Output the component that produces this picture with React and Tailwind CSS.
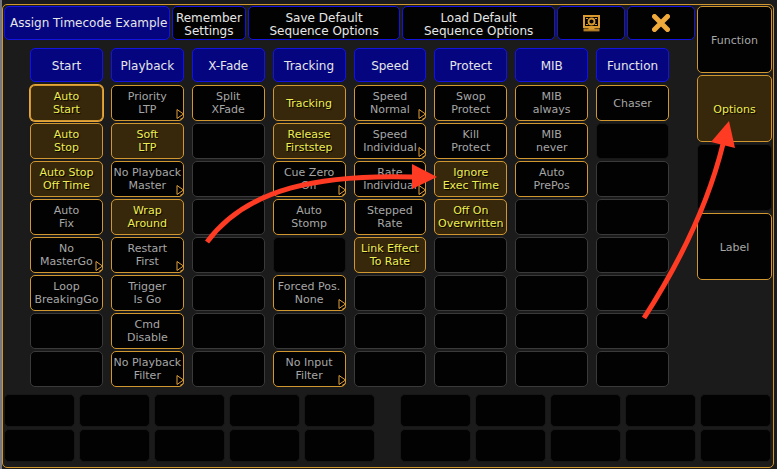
import React, { useState } from "react";

// label: text lines split by "\n", on: active, more: opens a submenu
// "" is an empty slot, null is a slot without a frame
const COLUMNS = [
  {
    title: "Start",
    cells: [
      { label: "Auto\nStart", on: true, focus: true },
      { label: "Auto\nStop", on: true },
      { label: "Auto Stop\nOff Time", on: true },
      { label: "Auto\nFix" },
      { label: "No\nMasterGo", more: true },
      { label: "Loop\nBreakingGo" },
      "",
      "",
    ],
  },
  {
    title: "Playback",
    cells: [
      { label: "Priority\nLTP", more: true },
      { label: "Soft\nLTP", on: true },
      { label: "No Playback\nMaster", more: true },
      { label: "Wrap\nAround", on: true },
      { label: "Restart\nFirst", more: true },
      { label: "Trigger\nIs Go" },
      { label: "Cmd\nDisable" },
      { label: "No Playback\nFilter", more: true },
    ],
  },
  {
    title: "X-Fade",
    cells: [{ label: "Split\nXFade" }, "", "", "", "", "", "", ""],
  },
  {
    title: "Tracking",
    cells: [
      { label: "Tracking", on: true },
      { label: "Release\nFirststep", on: true },
      { label: "Cue Zero\nOff", more: true },
      { label: "Auto\nStomp" },
      null,
      { label: "Forced Pos.\nNone", more: true },
      "",
      { label: "No Input\nFilter", more: true },
    ],
  },
  {
    title: "Speed",
    cells: [
      { label: "Speed\nNormal", more: true },
      { label: "Speed\nIndividual", more: true },
      { label: "Rate\nIndividual", more: true },
      { label: "Stepped\nRate" },
      { label: "Link Effect\nTo Rate", on: true },
      "",
      "",
      "",
    ],
  },
  {
    title: "Protect",
    cells: [
      { label: "Swop\nProtect" },
      { label: "Kill\nProtect" },
      { label: "Ignore\nExec Time", on: true },
      { label: "Off On\nOverwritten", on: true },
      "",
      "",
      "",
      "",
    ],
  },
  {
    title: "MIB",
    cells: [
      { label: "MIB\nalways" },
      { label: "MIB\nnever" },
      { label: "Auto\nPrePos" },
      "",
      "",
      "",
      "",
      "",
    ],
  },
  {
    title: "Function",
    cells: [{ label: "Chaser" }, null, "", "", "", "", "", ""],
  },
];

const TABS = ["Function", "Options", null, "Label"];

const OFF = "border-[#d0962f] bg-[#020202] text-[#a6a6a6]";
const ON =
  "border-[#d0962f] bg-[#38280b] text-[#eeee50] [text-shadow:1px_1px_1px_#000]";

function OptionCell({ cell }) {
  const [on, setOn] = useState(Boolean(cell && cell.on));

  if (!cell) {
    return (
      <div
        className={`h-9 rounded-[5px] border bg-[#020202] ${
          cell === null ? "border-[#171717]" : "border-[#3a3a3a]"
        }`}
      />
    );
  }

  return (
    <button
      type="button"
      aria-pressed={on}
      onClick={() => setOn(!on)}
      className={`relative h-9 w-full rounded-[5px] border text-[11px] leading-[13px] whitespace-pre ${
        on ? ON : OFF
      } ${cell.focus ? "ring-1 ring-[#e8a53a]" : ""}`}
    >
      <span className="flex justify-center">{cell.label}</span>
      {cell.more && (
        <svg
          className="absolute -right-px bottom-0 h-3 w-2"
          viewBox="0 0 8 12"
          fill="none"
          stroke="#e0a038"
          aria-hidden="true"
        >
          <path d="M1 1.5V10.5L7.5 6Z" />
          <path d="M4 11.5L7.5 9.5" />
        </svg>
      )}
    </button>
  );
}

function BarButton({ children, label }) {
  return (
    <button
      type="button"
      aria-label={label}
      className="flex h-[34px] items-center justify-center rounded-[5px] border border-[#1414e0] bg-[#020202] text-xs leading-[13px] whitespace-pre text-[#e6e6e6]"
    >
      {children}
    </button>
  );
}

function ScreenIcon() {
  return (
    <svg width="17" height="17" viewBox="0 0 17 17" fill="none" aria-hidden="true">
      <rect x="1" y="1" width="15" height="11" stroke="#d9992f" strokeWidth="2" />
      <circle cx="8.5" cy="6.5" r="3" stroke="#d9992f" strokeWidth="1.8" />
      <path d="M3 3.5h2M12 3.5h2M3 9.5h2M12 9.5h2" stroke="#d9992f" />
      <path d="M0.5 13.4h16v3h-16z" fill="#b07a24" />
      <path d="M5.5 12.4h6v2.2h-6z" fill="#d9992f" />
    </svg>
  );
}

function CloseIcon() {
  return (
    <svg width="18" height="18" viewBox="0 0 18 18" aria-hidden="true">
      <path
        d="M2.5 2.5L15.5 15.5M15.5 2.5L2.5 15.5"
        stroke="#f0aa3c"
        strokeWidth="5"
        strokeLinecap="round"
      />
    </svg>
  );
}

function SlotGroup() {
  return (
    <div className="grid flex-1 grid-cols-5 gap-x-1 gap-y-0.5">
      {Array.from({ length: 10 }, (_, i) => (
        <div
          key={i}
          className="h-[33px] rounded-[5px] border border-[#171717] bg-[#020202]"
        />
      ))}
    </div>
  );
}

// Red pointers drawn on top of the panel
function Pointers() {
  return (
    <svg
      className="pointer-events-none absolute inset-y-0 -left-0.5 h-full w-full"
      fill="none"
      aria-hidden="true"
    >
      <path
        d="M207 242C247 188 320 174 414 177"
        stroke="#ff3b24"
        strokeWidth="5"
      />
      <path d="M412 164L437 177L412 189Z" fill="#ff3b24" />
      <path
        d="M644 318C680 262 708 205 723 144"
        stroke="#ff3b24"
        strokeWidth="5"
      />
      <path d="M729 121L735 148L711 142Z" fill="#ff3b24" />
    </svg>
  );
}

export default function App() {
  const [tab, setTab] = useState("Options");

  return (
    <div className="relative min-h-screen border-l-2 border-[#77777c] bg-[#1b1b1b] pt-1 pr-[3px] font-['DejaVu_Sans',sans-serif]">
      <main className="rounded-[5px] border border-[#d0962f] p-px pb-[5px]">
        <div className="flex gap-0.5">
          <div className="min-w-0 flex-1">
            {/* Title bar */}
            <header className="grid grid-cols-[166fr_75fr_152fr_154fr_68fr_68fr] gap-0.5">
              <h1 className="h-[34px] overflow-hidden rounded-[5px] border border-[#1414e0] bg-[#050580] pl-[5px] text-xs leading-8 whitespace-nowrap text-[#e6e6e6]">
                Assign Timecode Example
              </h1>
              <BarButton>
                <span className="pt-1">{"Remember\nSettings"}</span>
              </BarButton>
              <BarButton>
                <span className="pt-1">{"Save Default\nSequence Options"}</span>
              </BarButton>
              <BarButton>
                <span className="pt-1">{"Load Default\nSequence Options"}</span>
              </BarButton>
              <BarButton label="Screen">
                <ScreenIcon />
              </BarButton>
              <BarButton label="Close">
                <CloseIcon />
              </BarButton>
            </header>

            {/* Options */}
            <div className="mt-2 grid grid-cols-8 gap-2 px-[26px]">
              {COLUMNS.map((col) => (
                <section key={col.title} className="min-w-0">
                  <h2 className="h-[34px] rounded-[5px] border border-[#1414e0] bg-[#050580] text-center text-xs leading-[34px] text-[#e6e6e6]">
                    {col.title}
                  </h2>
                  <div className="mt-[3px] flex flex-col gap-0.5">
                    {col.cells.map((cell, i) => (
                      <OptionCell key={i} cell={cell} />
                    ))}
                  </div>
                </section>
              ))}
            </div>
          </div>

          {/* Sidebar */}
          <nav className="flex w-[75px] flex-col gap-0.5">
            {TABS.map((name, i) =>
              name ? (
                <button
                  key={i}
                  type="button"
                  aria-pressed={tab === name}
                  onClick={() => setTab(name)}
                  className={`h-[67px] rounded-[5px] border pt-1 text-[11px] ${
                    tab === name ? ON : OFF
                  }`}
                >
                  {name}
                </button>
              ) : (
                <div
                  key={i}
                  className="h-[67px] rounded-[5px] border border-[#171717] bg-[#020202]"
                />
              )
            )}
          </nav>
        </div>

        <footer className="mt-[7px] flex gap-6 pr-px">
          <SlotGroup />
          <SlotGroup />
        </footer>
      </main>
      <Pointers />
    </div>
  );
}
